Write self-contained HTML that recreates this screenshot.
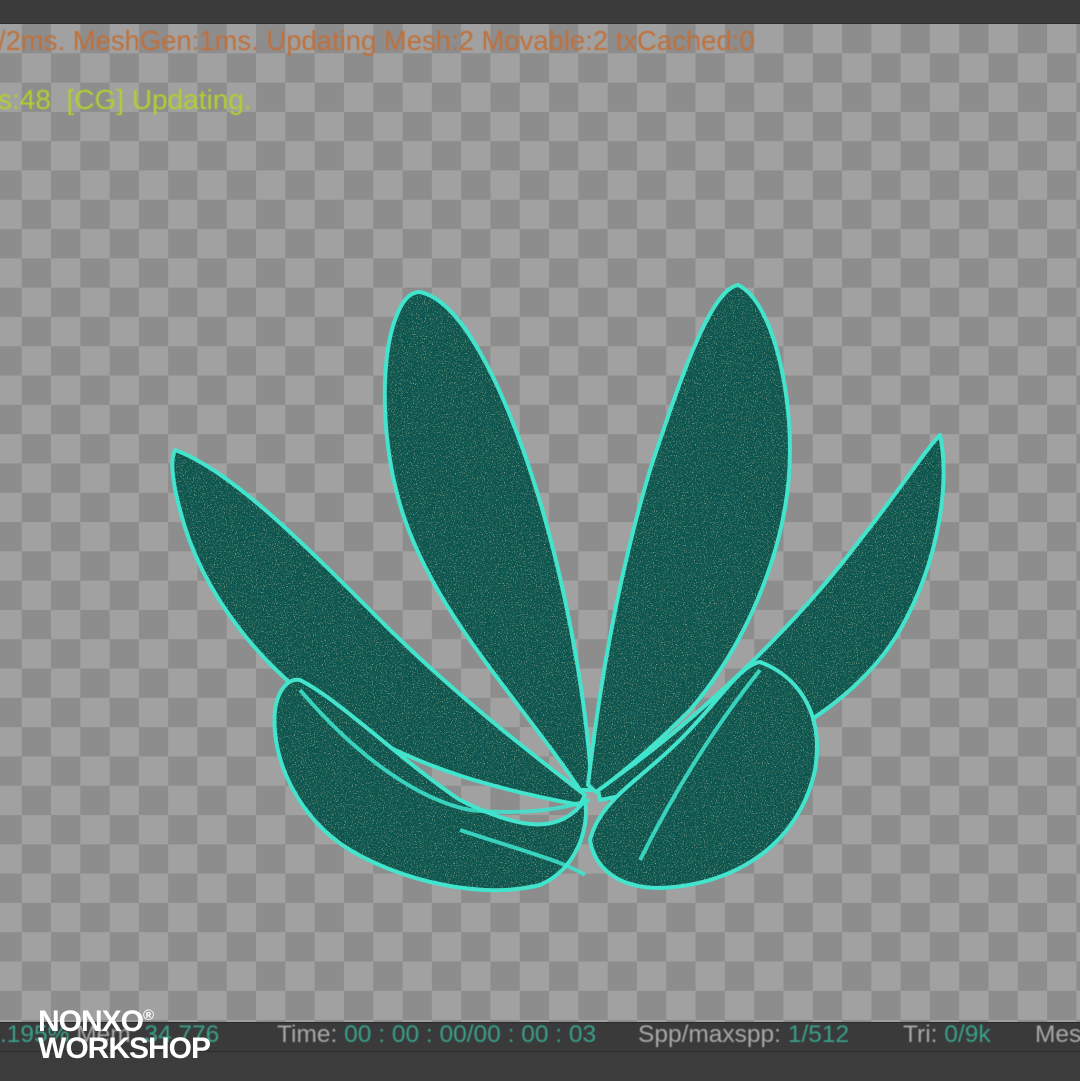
<!DOCTYPE html>
<html><head><meta charset="utf-8"><style>
html,body{margin:0;padding:0;width:1080px;height:1080px;overflow:hidden;background:#3a3a3a;font-family:"Liberation Sans",sans-serif}
#top{position:absolute;left:0;top:0;width:1080px;height:23px;background:#3b3b3b;border-bottom:1px solid #2e2e2e}
#vp{position:absolute;left:0;top:24px;width:1080px;height:998px;background:repeating-conic-gradient(#8d8d8d 0 25%,#a1a1a1 0 50%);background-size:58.6px 58.6px;background-position:-7.6px 0}
.t{position:absolute;font-size:28px;white-space:nowrap;filter:blur(.6px);transform-origin:0 0}
#status{position:absolute;left:0;top:1022px;width:1080px;height:28px;background:#3a3a3a;border-top:1px solid #2a2a2a}
#bot{position:absolute;left:0;top:1051px;width:1080px;height:29px;background:#3c3c3c;border-top:1px solid #2c2c2c}
.s{position:absolute;top:1021px;font-size:24.5px;color:#a8a8a8;white-space:nowrap;filter:blur(.5px)}
.s b{font-weight:normal;color:#3aa08a}
#logo{position:absolute;left:38px;top:1002px;color:#fff;font-weight:bold;font-size:30px;line-height:27px;letter-spacing:-1px}
</style></head><body>
<div id="top"></div>
<div id="vp"></div>
<div class="t" style="left:-2px;top:25px;color:#c0703a;transform:scaleX(0.98)">/2ms. MeshGen:1ms. Updating Mesh:2 Movable:2 txCached:0</div>
<div class="t" style="left:-2px;top:84px;color:#b0d030">s:48 &nbsp;[CG] Updating.</div>
<svg width="1080" height="1080" style="position:absolute;left:0;top:0">
<defs>
<filter id="n"><feTurbulence type="fractalNoise" baseFrequency="0.9" numOctaves="1" result="t"/><feColorMatrix in="t" type="matrix" values="0 0 0 0 0.3  0 0 0 0 0.45  0 0 0 0 0.3  0 0 0 6 -3.6" result="d"/><feComposite in="d" in2="SourceGraphic" operator="in" result="m"/><feMerge><feMergeNode in="SourceGraphic"/><feMergeNode in="m"/></feMerge></filter>
</defs>
<g fill="#10574f" stroke="#3ee6cf" stroke-width="4" stroke-linejoin="round" filter="url(#n)">
<path d="M175,450 C230,470 300,540 380,620 C460,700 540,760 585,795 L580,805 C500,790 420,770 340,720 C260,670 200,590 180,510 C172,480 170,460 175,450 Z"/>
<path d="M940,435 C950,480 940,560 900,630 C860,700 760,770 600,800 L598,790 C700,720 800,620 860,540 C900,490 925,450 940,435 Z"/>
<path d="M420,292 C460,300 500,380 530,470 C560,560 585,680 592,790 L580,790 C520,700 440,620 405,520 C380,450 380,360 395,320 C402,300 410,292 420,292 Z"/>
<path d="M738,285 C770,300 790,380 790,450 C790,540 750,640 690,710 C650,750 620,775 596,792 L588,785 C600,680 620,570 650,470 C680,380 710,290 738,285 Z"/>
<path d="M300,680 C340,700 400,760 460,800 C520,830 560,835 585,800 C590,830 575,870 540,885 C480,900 400,880 350,850 C300,820 270,760 275,710 C278,690 288,678 300,680 Z"/>
<path d="M760,662 C795,675 825,710 815,770 C800,840 740,885 660,888 C620,888 595,870 590,840 C600,800 640,780 680,740 C720,700 740,665 760,662 Z"/>
</g>
<g fill="none" stroke="#3ee6cf" stroke-width="4" opacity=".85">
<path d="M300,690 C360,760 420,800 470,810 C520,815 560,810 590,800"/>
<path d="M460,830 C520,850 560,860 585,875"/>
<path d="M760,670 C720,720 680,780 640,860"/>
</g>
</svg>
<div id="status"></div>
<div id="bot"></div>
<div class="s" style="left:0"><b>.195%</b> Mem: <b>34.776</b></div>
<div class="s" style="left:277px">Time: <b>00 : 00 : 00/00 : 00 : 03</b></div>
<div class="s" style="left:638px">Spp/maxspp: <b>1/512</b></div>
<div class="s" style="left:903px">Tri: <b>0/9k</b></div>
<div class="s" style="left:1035px">Mes</div>
<div id="logo">NONXO<sup style="font-size:15px;vertical-align:11px">®</sup><br>WORKSHOP</div>
</body></html>
